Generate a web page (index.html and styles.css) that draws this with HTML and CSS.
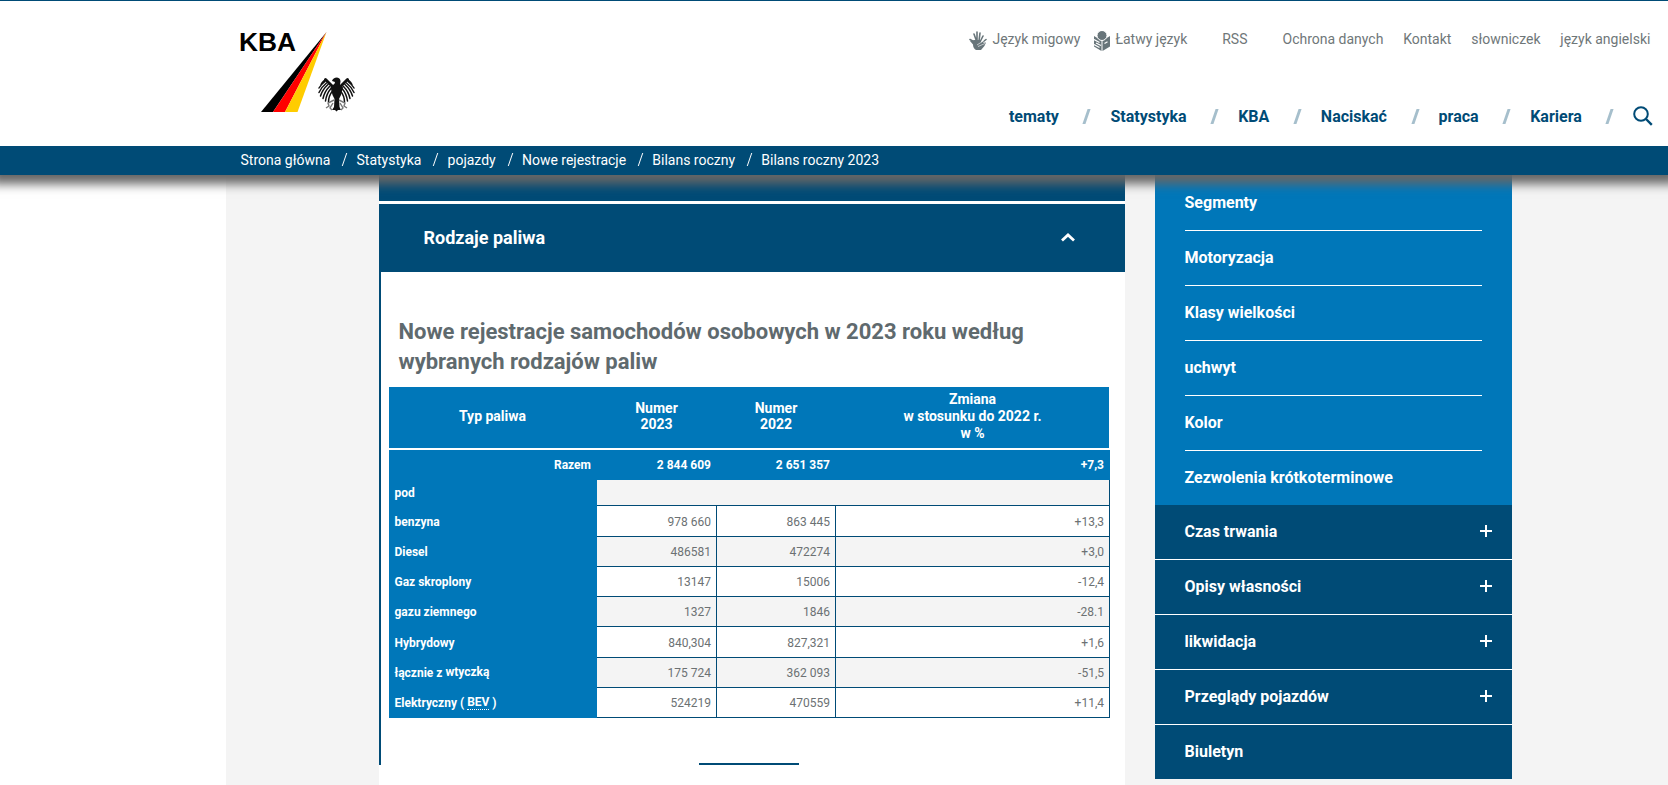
FILE: index.html
```html
<!DOCTYPE html>
<html lang="pl">
<head>
<meta charset="utf-8">
<title>KBA - Bilans roczny 2023</title>
<link rel="stylesheet" href="styles.css">
</head>
<body>
<header class="header">
  <svg class="logo" width="130" height="100" viewBox="0 0 130 100">
    <text class="logo-text" x="-1" y="25" textLength="57" lengthAdjust="spacingAndGlyphs">KBA</text>
    <path d="M86.500 6 21 86h12z" fill="#000"/>
    <path d="M86.500 6 33 86h12z" fill="#f00"/>
    <path d="M86.500 6 45 86h12.500z" fill="#fc0"/>
    <g id="wing" fill="none" stroke="#111" stroke-width="1.500" stroke-linecap="round">
      <path d="M85.500 53.500q-4 3-4.500 5.500M85 55.500q-4 3-6 6.500M86.500 57q-5 4-7.500 9.500M88 58.500q-5.500 5-7.500 11.500M89.500 60.500q-5 5-6.500 12M91 62.500q-4.500 5-5.500 12.500M92.500 65q-4 5-4 11"/>
      <path d="M85.500 53.500q4 4 8 8" stroke-width="3"/>
    </g>
    <use href="#wing" transform="matrix(-1 0 0 1 193 0)"/>
    <path d="M93 59q2-1 2-3l-3-1q1-3.500 5-3.500 3.500.5 3.500 4L100 59l3 2-2 8-2 4 .5 8 1.500 3h-3l-1.500 1.500L95 84h-3l2-3 .5-8-2-4-2-8z" fill="#111"/>
    <path d="m94 74-6 3 1 3-3 2m7-5-3 5 2 2m7-10 6 3-1 3 3 2m-7-5 3 5-2 2" fill="none" stroke="#777" stroke-width="1.400"/>
  </svg>
  <div class="menus">
    <nav class="service">
      <a class="with-icon"><svg width="18" height="20" viewBox="0 0 18 20"><path d="M1 8.500 5.500 11M5 3l2.500 7M8 1v9M11 2l-1 8M14 5l-3 6M17 8.500l-5 4" fill="none" stroke="#68757a" stroke-width="1.600" stroke-linecap="round"/><path d="M5.500 9h6l1 3 4.500-.5q-1 4-5 7.500H7q-3-2-3-5.500L1 10z" fill="#68757a"/><path d="m8 14 7-4.500M9 15.500l7-3" stroke="#fff" stroke-width=".6"/></svg>Język migowy</a>
      <a class="with-icon book"><svg width="16" height="20" viewBox="0 0 16 20"><path d="M0 5 7.500 9.500V20L0 15.500zM16 5 8.500 9.500V20l7.500-4.500z" fill="#68757a"/><circle cx="8" cy="4.500" r="5" fill="#68757a" stroke="#fff"/><path d="m0 8.500 5.500 3M2 12l5 2.500M0 13.500l5.500 3" stroke="#fff" stroke-width="1.200"/><path d="m10.500 12.500 3-1.800" stroke="#fff" stroke-width="1.200"/></svg>Łatwy język</a>
      <a class="wide">RSS</a><a class="wide">Ochrona danych</a><a>Kontakt</a><a>słowniczek</a><a>język angielski</a>
    </nav>
    <nav class="main-nav">
      <a>tematy</a><a>Statystyka</a><a>KBA</a><a>Naciskać</a><a>praca</a><a>Kariera</a>
      <svg class="search" width="20" height="20" viewBox="0 0 20 20" fill="none" stroke="#004b76" stroke-width="2"><circle cx="8" cy="8" r="6.800"/><path d="m13 13 5.800 5.800" stroke-width="2.400"/></svg>
    </nav>
  </div>
</header>
<nav class="crumbs"><a>Strona główna</a><a>Statystyka</a><a>pojazdy</a><a>Nowe rejestracje</a><a>Bilans roczny</a><a>Bilans roczny 2023</a></nav>
<div class="page">
  <main class="main">
    <div class="panel-previous"></div>
    <h2 class="panel-title">Rodzaje paliwa<svg width="14" height="10" viewBox="0 0 14 10"><path d="m1 8.500 6-5.500 6 5.500" fill="none" stroke="#fff" stroke-width="2.800"/></svg></h2>
    <section class="panel">
      <h3 class="title">Nowe rejestracje samochodów osobowych w 2023 roku według wybranych rodzajów paliw</h3>
      <table class="data">
        <colgroup><col class="c-type"><col class="c-now"><col class="c-before"><col class="c-change"></colgroup>
        <thead><tr><th>Typ paliwa</th><th>Numer<br>2023</th><th>Numer<br>2022</th><th class="change">Zmiana<br>w stosunku do 2022 r.<br>w %</th></tr></thead>
        <tbody>
          <tr class="total"><th>Razem</th><td>2 844 609</td><td>2 651 357</td><td>+7,3</td></tr>
          <tr class="sub"><th>pod</th><td colspan="3"></td></tr>
          <tr class="tall"><th>benzyna</th><td>978 660</td><td>863 445</td><td>+13,3</td></tr>
          <tr><th>Diesel</th><td>486581</td><td>472274</td><td>+3,0</td></tr>
          <tr><th>Gaz skroplony</th><td>13147</td><td>15006</td><td>-12,4</td></tr>
          <tr><th>gazu ziemnego</th><td>1327</td><td>1846</td><td>-28.1</td></tr>
          <tr class="tall"><th>Hybrydowy</th><td>840,304</td><td>827,321</td><td>+1,6</td></tr>
          <tr><th>łącznie z <span class="raised">wtyczką</span></th><td>175 724</td><td>362 093</td><td>-51,5</td></tr>
          <tr><th>Elektryczny ( <span class="raised abbr">BEV</span> )</th><td>524219</td><td>470559</td><td>+11,4</td></tr>
        </tbody>
      </table>
    </section>
  </main>
  <aside class="side">
    <ul class="side-light"><li>Segmenty</li><li>Motoryzacja</li><li>Klasy wielkości</li><li>uchwyt</li><li>Kolor</li><li>Zezwolenia krótkoterminowe</li></ul>
    <ul class="side-dark"><li>Czas trwania<i class="plus"></i></li><li>Opisy własności<i class="plus"></i></li><li>likwidacja<i class="plus"></i></li><li>Przeglądy pojazdów<i class="plus"></i></li><li>Biuletyn</li></ul>
  </aside>
</div>
</body>
</html>
```
FILE: styles.css
```css
* { box-sizing: border-box; }
body { margin: 0; height: 785px; overflow: hidden; background: #fff; font-family: Roboto, "Liberation Sans", sans-serif; display: flex; flex-direction: column; }
h2, h3, ul { margin: 0; padding: 0; }
ul { list-style: none; }

.header { flex: none; position: relative; z-index: 2; height: 146px; background: #fff; border-top: 1px solid #004b76; display: flex; justify-content: space-between; padding: 25px 15px 0 240px; }
.logo { flex: none; overflow: visible; }
.logo-text { font: bold 26px "Liberation Sans", Arial, sans-serif; }
.menus { display: flex; flex-direction: column; align-items: flex-end; }
.service { display: flex; margin: 3px 2.6px 0 0; color: #6f7779; font-size: 14px; line-height: 20px; white-space: nowrap; }
.service a { margin-left: 19.8px; }
.service .wide { margin-left: 35px; }
.service .with-icon { display: flex; gap: 5px; margin-left: 14px; }
.service .book { gap: 5px; }
.service svg { margin-top: 2px; }
.main-nav { display: flex; align-items: center; margin-top: 54px; color: #004b76; font-size: 16px; font-weight: 700; line-height: 24px; }
.main-nav a { display: flex; align-items: center; }
.main-nav a::after { content: ""; width: 2.6px; height: 15px; margin: -1px 22.4px 0 26.6px; background: #a6bfcc; transform: skewX(-19deg); }
.main-nav a:nth-last-child(2)::after { margin-right: 22px; }
.search { margin-top: -2px; }

.crumbs { flex: none; position: relative; z-index: 1; height: 29px; padding-left: 240.5px; display: flex; background: #004b76; color: #fff; font-size: 14px; line-height: 26px; box-shadow: 0 0 10px 9px #666; }
.crumbs a { display: flex; align-items: center; height: 27px; }
.crumbs a + a::before { content: ""; width: 1.4px; height: 13px; margin: 0 10.8px 0 14px; background: #fff; transform: skewX(-19deg); }

.page { flex: 1; min-height: 0; margin-left: 226px; padding: 0 156px 0 153px; display: flex; justify-content: space-between; align-items: flex-start; background: #f4f4f4; }
.main { width: 746px; height: 610px; background: #fff; }
.panel-previous { height: 26px; background: #004b76; }
.panel-title { height: 68px; margin-top: 3px; padding: 0 50px 2px 44.500px; display: flex; align-items: center; justify-content: space-between; background: #004b76; color: #fff; font-size: 18px; font-weight: 700; }
.panel { position: relative; height: 493px; border-left: 2px solid #004b76; padding: 45px 15px 0 8px; }
.panel::after { content: ""; position: absolute; left: 318px; bottom: 0; width: 100px; height: 2px; background: #004b76; }
.title { height: 70px; padding-left: 9.5px; color: #5f6a6e; font-size: 22px; line-height: 30px; font-weight: 700; }

.data { width: 721px; table-layout: fixed; border-collapse: separate; border-spacing: 0; font-size: 12px; line-height: 14px; color: #6c7173; }
.c-type { width: 208px; }
.c-now { width: 120px; }
.c-before { width: 119px; }
.c-change { width: 274px; }
.data th, .data td { padding: 0 5px; vertical-align: middle; }
.data thead th { height: 63px; padding: 0 1px 3px 0; background: #0077b9; color: #fff; font-size: 14px; line-height: 16px; border-bottom: 2px solid #fff; }
.data thead .change { padding-right: 0; line-height: 17px; border-right: 1px solid #fff; }
.data tbody tr { height: 30px; }
.data tbody tr.tall { height: 31px; }
.data tbody tr.sub { height: 26px; }
.data tbody th { background: #0077b9; color: #fff; text-align: left; padding-left: 5.500px; }
.data td { text-align: right; border-right: 1px solid #004b76; border-bottom: 1px solid #004b76; }
.data tbody tr.tall td { padding-top: 2px; }
.data tbody tr:nth-child(even) td { background: #f4f4f4; }
.data tbody tr.total > * { background: #0077b9; color: #fff; border-color: #0077b9; text-align: right; font-weight: 700; padding-right: 6px; }
.data tbody tr.total td { padding-right: 5px; }
.raised { position: relative; top: -1px; }
.abbr { border-bottom: 1px dotted #fff; }

.side { width: 357px; color: #fff; font-size: 16px; font-weight: 700; line-height: 24px; }
.side-light { padding: 1px 30px 0 29.5px; height: 330px; background: #0077b9; }
.side-light li { height: 55px; padding-top: 15px; border-bottom: 1px solid #fff; }
.side-light li:last-child { border: 0; }
.side-dark { background: #004b76; }
.side-dark li { height: 55px; padding: 0 20px 0 29.5px; display: flex; align-items: center; justify-content: space-between; border-bottom: 1px solid #fff; }
.side-dark li:last-child { height: 54px; border: 0; }
.plus { width: 12px; height: 12px; margin-top: -2px; background: linear-gradient(#fff, #fff) center / 12px 2px no-repeat, linear-gradient(#fff, #fff) center / 2px 12px no-repeat; }
```
